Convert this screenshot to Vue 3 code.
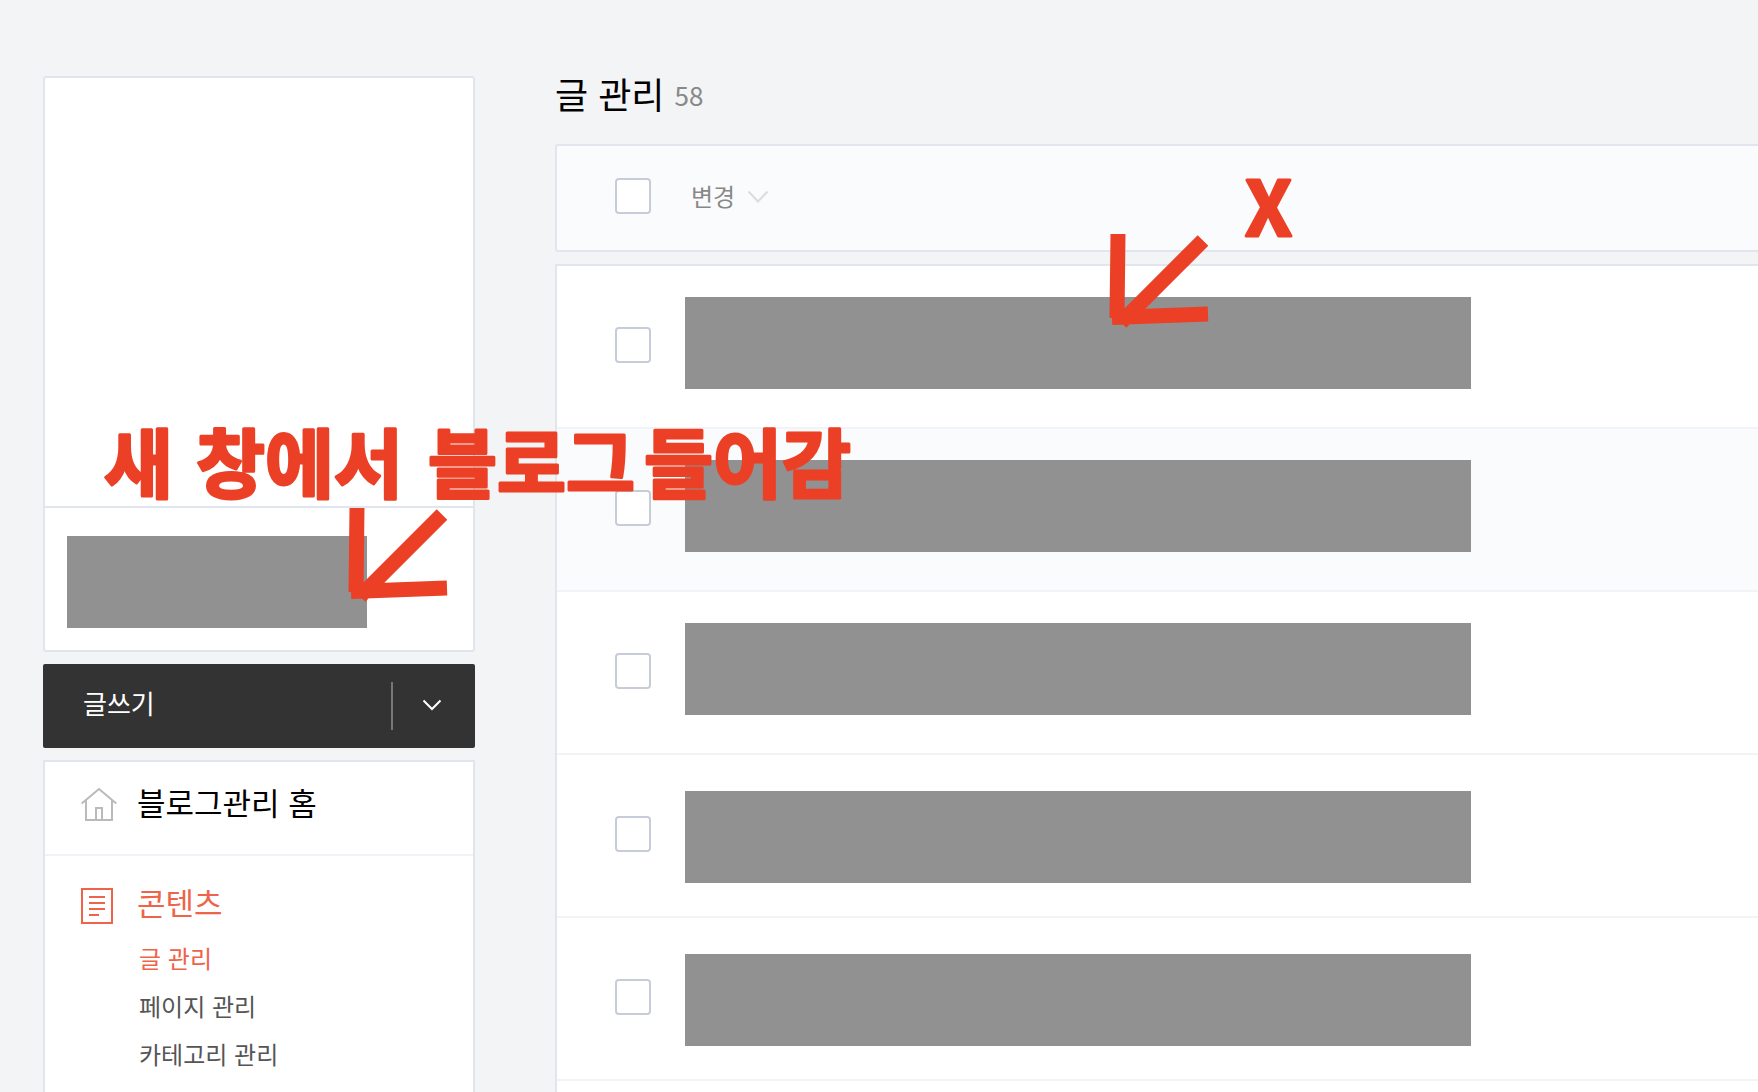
<script setup>
import { ref } from 'vue'

const allChecked = ref(false)
const posts = ref([
  { id: 1, checked: false },
  { id: 2, checked: false, shaded: true },
  { id: 3, checked: false },
  { id: 4, checked: false, low: true },
  { id: 5, checked: false, low: true },
  { id: 6, checked: false },
])
const contentLinks = [
  { text: '글 관리', active: true },
  { text: '페이지 관리' },
  { text: '카테고리 관리' },
]
const noteWords = [
  { text: '새', x: 10 },
  { text: '창에서', x: 102 },
  { text: '블로그', x: 334 },
  { text: '들어감', x: 550 },
]

function toggleAll() {
  posts.value.forEach((post) => (post.checked = allChecked.value))
}
</script>

<template>
  <div class="page">
    <aside class="sidebar">
      <section class="profile">
        <div class="profile-image"></div>
        <div class="profile-info"><div class="mask mask-profile"></div></div>
      </section>

      <div class="write">
        <button type="button" class="write-main">글쓰기</button>
        <button type="button" class="write-more" aria-label="더보기">
          <svg width="20" height="12" viewBox="0 0 20 12" fill="none" stroke="#fff" stroke-width="2">
            <path d="M1.500 1.500L10 10L18.500 1.500" />
          </svg>
        </button>
      </div>

      <nav class="menu">
        <a href="#" class="menu-head menu-home">
          <svg width="36" height="36" viewBox="0 0 36 36" fill="none" stroke="#bababa" stroke-width="2">
            <path d="M.7 17.600L18 3L35.300 17.600M5 14V34H31V14M15 34V22H21V34" />
          </svg>
          <span>블로그관리 홈</span>
        </a>
        <div class="menu-group">
          <a href="#" class="menu-head active">
            <svg width="36" height="36" viewBox="0 0 36 36" fill="none" stroke="#ef6349" stroke-width="2">
              <path d="M1 1H31V35H1ZM8 9H24M8 15H24M8 21H24M8 27H18" />
            </svg>
            <span>콘텐츠</span>
          </a>
          <ul class="submenu">
            <li v-for="link in contentLinks" :key="link.text">
              <a href="#" :class="{ active: link.active }">{{ link.text }}</a>
            </li>
          </ul>
        </div>
      </nav>
    </aside>

    <main class="content">
      <header class="heading">
        <h1 class="title">글 관리</h1>
        <span class="count">58</span>
      </header>

      <div class="toolbar">
        <input v-model="allChecked" type="checkbox" class="check" aria-label="전체 선택" @change="toggleAll" />
        <label class="change">
          <select aria-label="변경">
            <option>변경</option>
          </select>
          <svg width="22" height="14" viewBox="0 0 22 14" fill="none" stroke="#dcdcdc" stroke-width="2">
            <path d="M1.500 2.500L11 12.500L20.500 2.500" />
          </svg>
        </label>
      </div>

      <ul class="posts">
        <li v-for="post in posts" :key="post.id" class="post" :class="{ shaded: post.shaded, low: post.low }">
          <input v-model="post.checked" type="checkbox" class="check" aria-label="글 선택" />
          <div class="mask mask-post"></div>
        </li>
      </ul>
    </main>

    <svg class="note note-blog" width="780" height="100" viewBox="0 0 780 100">
      <text v-for="word in noteWords" :key="word.text" :x="word.x" y="78">{{ word.text }}</text>
    </svg>
    <svg class="note note-x" width="70" height="80" viewBox="0 0 70 80">
      <text x="10" y="66">X</text>
    </svg>
    <svg
      v-for="place in ['arrow-blog', 'arrow-post']"
      :key="place"
      class="arrow"
      :class="place"
      width="110"
      height="110"
      viewBox="0 0 110 110"
      fill="none"
      stroke="#eb4026"
      stroke-width="15"
    >
      <path d="M17 8L16 92M102 14.500L20 96.500M107 88L11 91.500" />
    </svg>
  </div>
</template>

<style>
body {
  margin: 0;
  background: #f3f4f6;
}
</style>

<style scoped>
.page {
  position: relative;
  display: flex;
  gap: 80px;
  box-sizing: border-box;
  height: 100vh;
  padding: 76px 0 0 43px;
  overflow: hidden;
  background: #f3f4f6;
  color: #000;
  font-family: Inter, "Noto Sans CJK KR", sans-serif;
}

.page a {
  color: inherit;
  text-decoration: none;
}

.page ul,
.page h1 {
  margin: 0;
  padding: 0;
  list-style: none;
}

.sidebar {
  display: flex;
  flex: 0 0 432px;
  flex-direction: column;
  gap: 12px;
}

.profile {
  border: 2px solid #e0e5ee;
  border-radius: 3px;
  background: #fff;
}

.profile-image {
  height: 428px;
  border-bottom: 2px solid #e0e5ee;
}

.profile-info {
  padding: 28px 22px 22px;
}

.mask {
  height: 92px;
  background: #919191;
}

.mask-profile {
  width: 300px;
}

.write {
  display: flex;
  align-items: center;
  flex: 0 0 84px;
  border-radius: 2px;
  background: #333;
}

.write button {
  border: 0;
  background: none;
  color: #fff;
  font: 400 26px/48px "Noto Sans CJK KR", sans-serif;
}

.write .write-main {
  flex: 1;
  padding: 0 40px 6px;
  text-align: left;
}

.write .write-more {
  display: flex;
  align-items: center;
  justify-content: center;
  width: 84px;
  height: 48px;
  padding: 0 12px 2px 8px;
  border-left: 2px solid #777;
}

.menu {
  flex: 1 0 auto;
  border: 2px solid #e0e5ee;
  border-bottom: 0;
  background: #fff;
}

.menu-head {
  display: flex;
  align-items: center;
  gap: 20px;
  height: 60px;
  padding: 0 36px;
  font-size: 31px;
  line-height: 40px;
}

.menu-group span {
  padding-bottom: 4px;
}

.menu-home {
  height: 84px;
  padding-bottom: 8px;
  border-bottom: 2px solid #f0f2f7;
}

.menu-group {
  padding-top: 20px;
}

.page .active {
  color: #ef6349;
}

.submenu {
  color: #555;
  font-size: 24px;
  line-height: 48px;
}

.page .submenu {
  padding-left: 94px;
}

.content {
  flex: 1;
  min-width: 0;
}

.heading {
  display: flex;
  align-items: center;
  gap: 10px;
  height: 40px;
  margin-bottom: 28px;
}

.title {
  font-size: 36px;
  font-weight: 400;
  line-height: 40px;
}

.count {
  padding-bottom: 2px;
  color: #888;
  font: 400 26px/36px "Noto Sans CJK KR", sans-serif;
}

.toolbar {
  display: flex;
  align-items: center;
  gap: 40px;
  box-sizing: border-box;
  height: 108px;
  margin-bottom: 12px;
  padding: 0 58px 4px;
  border: 2px solid #e0e5ee;
  border-right: 0;
  border-radius: 3px 0 0 3px;
  background: #fafbfd;
}

.check {
  flex: none;
  box-sizing: border-box;
  width: 36px;
  height: 36px;
  margin: 0;
  border: 2px solid #c6ccd8;
  border-radius: 4px;
  appearance: none;
  background: #fff;
}

.change {
  display: flex;
  align-items: center;
  gap: 11px;
}

.change select {
  padding: 0;
  border: 0;
  appearance: none;
  background: none;
  color: #888;
  font: 400 24px/36px "Noto Sans CJK KR", sans-serif;
}

.posts {
  border-top: 2px solid #e0e5ee;
  border-left: 2px solid #e0e5ee;
  background: #fff;
}

.post {
  display: flex;
  align-items: flex-start;
  gap: 34px;
  box-sizing: border-box;
  height: 163px;
  padding: 31px 58px 0;
  border-bottom: 2px solid #f1f3f6;
}

.post .check {
  margin-top: 30px;
}

.shaded {
  background: #fafbfd;
}

.mask-post {
  flex: 0 1 786px;
}

.low .mask-post {
  margin-top: 5px;
}

.note {
  position: absolute;
  overflow: visible;
  fill: #eb4026;
  stroke: #eb4026;
  stroke-width: 3px;
  stroke-linejoin: round;
  font-family: "Noto Sans CJK KR", sans-serif;
  font-size: 75px;
  font-weight: 700;
  pointer-events: none;
}

.note-blog {
  top: 414px;
  left: 94px;
}

.note-x {
  top: 170px;
  left: 1235px;
}

.arrow {
  position: absolute;
  pointer-events: none;
}

.arrow-blog {
  top: 500px;
  left: 340px;
}

.arrow-post {
  top: 226px;
  left: 1101px;
}
</style>
